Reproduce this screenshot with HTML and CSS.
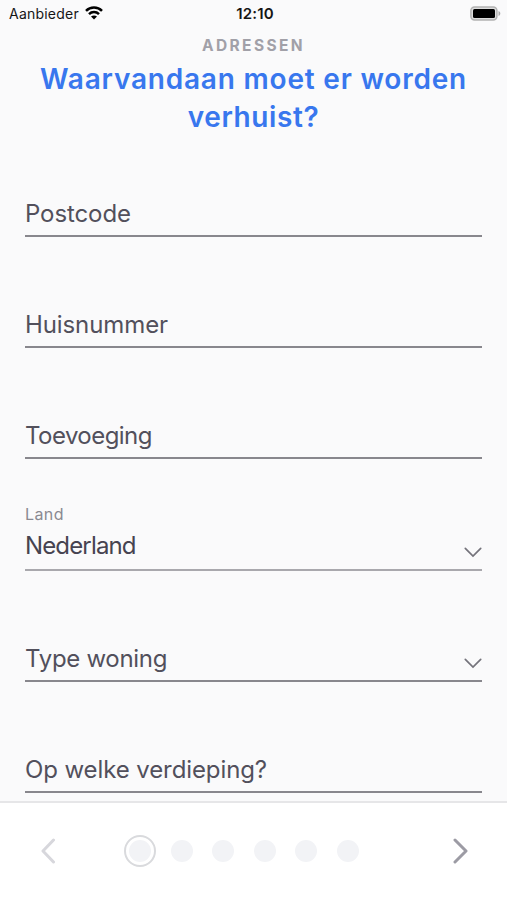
FILE: index.html
```html
<!DOCTYPE html>
<html lang="nl">
<head>
<meta charset="utf-8">
<title>Adressen</title>
<link rel="stylesheet" href="styles.css">
</head>
<body>
<header class="status">
  <div class="carrier"><span class="carrier-name">Aanbieder</span>
    <svg class="wifi" width="18" height="14" viewBox="0 0 18 14" fill="none" stroke="#000" stroke-width="2.5"><path d="M1 4.9C5.4.5 12.6.5 17 4.9M4 8.1c2.8-2.7 7.2-2.7 10 0"/><path d="M6 10.500c1.800-1.500 4.200-1.500 6 0L9 13.600z" fill="#000" stroke="none"/></svg>
  </div>
  <time class="clock">12:10</time>
  <svg class="battery" width="31" height="15" viewBox="0 0 31 15"><rect x=".9" y=".9" width="26" height="13" rx="3.6" fill="#dedede" stroke="#b2b2b2" stroke-width="1.5"/><rect x="3" y="3" width="22" height="9" rx="1.5" fill="#000"/><path d="M28.500 5c2.400.8 2.400 4.200 0 5z" fill="#aaa"/></svg>
</header>
<main class="content">
  <p class="eyebrow">ADRESSEN</p>
  <h1 class="title"><span class="title-lead">Waarvandaan moet er worden</span><br><span class="title-end">verhuist?</span></h1>
  <form class="form">
    <div class="field"><span class="label">Postcode</span></div>
    <div class="field"><span class="label">Huisnummer</span></div>
    <div class="field"><span class="label tight">Toevoeging</span></div>
    <div class="field filled"><div class="stack"><span class="caption">Land</span><span class="label value">Nederland</span></div>
      <svg class="chevron" width="18" height="11" viewBox="0 0 18 11"><path d="M1.300 1.300 9 9l7.700-7.700"/></svg></div>
    <div class="field"><span class="label snug">Type woning</span>
      <svg class="chevron" width="18" height="11" viewBox="0 0 18 11"><path d="M1.300 1.300 9 9l7.700-7.700"/></svg></div>
    <div class="field"><span class="label">Op welke verdieping?</span></div>
  </form>
</main>
<nav class="pager">
  <svg class="arrow prev" width="16" height="26" viewBox="0 0 16 26"><path d="M14.500 2 4 13l10.500 11"/></svg>
  <div class="dots"><i class="dot active"></i><i class="dot"></i><i class="dot"></i><i class="dot"></i><i class="dot"></i><i class="dot"></i></div>
  <svg class="arrow next" width="16" height="26" viewBox="0 0 16 26"><path d="m2 2 11 11L2 24"/></svg>
</nav>
</body>
</html>
```
FILE: styles.css
```css
* { box-sizing: border-box; }
body {
  margin: 0;
  width: 507px;
  height: 900px;
  overflow: hidden;
  display: flex;
  flex-direction: column;
  background: #fafafb;
  font-family: Inter, "Liberation Sans", sans-serif;
  color: #52505c;
}
.status {
  height: 28px;
  flex: none;
  display: grid;
  grid-template-columns: 1fr auto 1fr;
  align-items: center;
  padding: 0 6px 2px 9px;
  color: #161616;
  font-size: 14px;
}
.carrier { display: flex; align-items: center; gap: 6px; }
.carrier-name { letter-spacing: 0.22px; }
.clock { font-size: 15px; font-weight: 600; letter-spacing: 0.2px; }
.battery { justify-self: end; }
.content { height: 773px; flex: none; overflow: hidden; padding: 0 25px; }
.eyebrow {
  margin: 8px 0 0;
  height: 20px;
  line-height: 20px;
  font-size: 15.5px;
  font-weight: 700;
  letter-spacing: 2.400px;
  text-align: center;
  color: #a1a0a8;
}
.title {
  margin: 4px 0 0;
  font-size: 28px;
  line-height: 38px;
  font-weight: 600;
  text-align: center;
  white-space: nowrap;
  color: #3877ee;
}
.title-lead { letter-spacing: 0.8px; }
.title-end { letter-spacing: 0.6px; }
.form { margin-top: 12px; }
.field {
  height: 111.2px;
  display: flex;
  align-items: flex-end;
  justify-content: space-between;
  border-bottom: 2px solid #88878d;
  padding-bottom: 6px;
}
.field:first-child { height: 89px; }
.field.filled { border-color: #a9a8ad; }
.label { font-size: 24px; line-height: 30px; letter-spacing: -0.1px; white-space: nowrap; }
.tight { letter-spacing: -0.55px; }
.snug { letter-spacing: -0.3px; }
.stack { display: flex; flex-direction: column; }
.caption { font-size: 16px; line-height: 20px; letter-spacing: 0.4px; margin-bottom: 7px; color: #8a8991; }
.value { color: #464350; letter-spacing: -0.85px; margin-bottom: 2px; }
.chevron { fill: none; stroke: #74737b; stroke-width: 1.7; stroke-linecap: round; margin: 0 0 5px; }
.pager {
  height: 99px;
  flex: none;
  border-top: 2px solid #e6e6e8;
  background: #fff;
  display: flex;
  align-items: center;
  padding: 0 38px 1px 39px;
}
.arrow { fill: none; stroke-width: 3; stroke-linecap: round; stroke-linejoin: round; }
.prev { stroke: #d7d7dc; }
.next { stroke: #9c9ba4; margin-left: auto; }
.dots { display: flex; align-items: center; gap: 19.500px; margin-left: 69px; }
.dot { width: 22px; height: 22px; border-radius: 50%; background: #f2f3f6; }
.dot.active { width: 32px; height: 32px; margin-right: -5px; border: 2px solid #d9dadd; padding: 3px; background-clip: content-box; }
```
